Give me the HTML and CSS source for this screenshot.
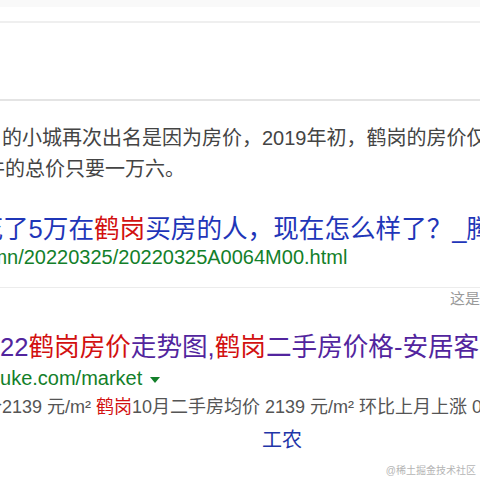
FILE: index.html
```html
<!DOCTYPE html>
<html lang="zh-CN">
<head>
<meta charset="utf-8">
<title>鹤岗房价</title>
<link rel="stylesheet" href="styles.css">
</head>
<body>
<div class="page">
  <div class="topband"></div>
  <div class="topbar"></div>
  <div class="blank"></div>

  <div class="abstract">
    <div class="line l1">的小城再次出名是因为房价，2019年初，鹤岗的房价仅仅</div>
    <div class="line l2">件的总价只要一万六。</div>
  </div>

  <div class="title t1">花了5万在<em>鹤岗</em>买房的人，现在怎么样了？_腾讯新闻</div>
  <div class="url u1">new.qq.com/omn/20220325/20220325A0064M00.html</div>

  <div class="sep"></div>
  <div class="note">这是关于</div>

  <div class="title t2 visited">2022<em>鹤岗房价</em>走势图,<em>鹤岗</em>二手房价格-安居客</div>
  <div class="url u2">anjuke.com/market <span class="caret"></span></div>
  <div class="abstract2">均价2139 元/m² <em>鹤岗</em>10月二手房均价 2139 元/m² 环比上月上涨 0.12%</div>

  <div class="link">工农</div>

  <div class="watermark">@稀土掘金技术社区</div>
</div>
</body>
</html>
```
FILE: styles.css
```css
html, body {
  margin: 0;
  padding: 0;
  background: #ffffff;
}
body {
  width: 480px;
  height: 480px;
  overflow: hidden;
  font-family: "Liberation Sans", "Noto Sans CJK SC", sans-serif;
}
.page {
  position: relative;
  width: 480px;
  height: 480px;
  overflow: hidden;
}
em {
  font-style: normal;
  color: #d21010;
}
.topband {
  height: 7px;
  background: #f9f9f9;
}
.topbar {
  height: 14px;
  background: #ffffff;
  border-bottom: 2px solid #efefef;
}
.blank {
  height: 76px;
  border-bottom: 2px solid #e4e4e4;
}
.abstract {
  margin-top: 22px;
  font-size: 20px;
  line-height: 31px;
  color: #444444;
}
.line {
  white-space: nowrap;
}
.l1 {
  margin-left: 2px;
}
.l2 {
  margin-left: -15px;
}
.title {
  white-space: nowrap;
  font-size: 25.6px;
  line-height: 30px;
  color: #1f36b8;
}
.t1 {
  margin-top: 29px;
  margin-left: -22.6px;
}
.url {
  white-space: nowrap;
  font-size: 20px;
  line-height: 26px;
  color: #137f2a;
}
.u1 {
  margin-left: -133px;
}
.sep {
  margin-top: 17px;
  border-top: 1px solid #ececec;
}
.note {
  padding-left: 450px;
  white-space: nowrap;
  font-size: 15px;
  line-height: 20px;
  margin-top: 1px;
  color: #9a9a9a;
}
.t2 {
  margin-top: 23px;
  margin-left: -28.5px;
}
.visited {
  color: #52259e;
}
.u2 {
  margin-top: 3px;
  margin-left: -26.7px;
}
.caret {
  display: inline-block;
  width: 0;
  height: 0;
  border-left: 5px solid transparent;
  border-right: 5px solid transparent;
  border-top: 6px solid #137f2a;
  vertical-align: middle;
  margin-left: 2px;
}
.abstract2 {
  white-space: nowrap;
  font-size: 18px;
  line-height: 28px;
  color: #555555;
  margin-top: 2px;
  margin-left: -34px;
}
.link {
  margin-top: 4px;
  padding-left: 262px;
  font-size: 20px;
  line-height: 30px;
  color: #1f35a8;
}
.watermark {
  position: absolute;
  right: 4px;
  top: 464px;
  font-size: 10px;
  line-height: 14px;
  color: #b5b5b5;
  white-space: nowrap;
}
```
